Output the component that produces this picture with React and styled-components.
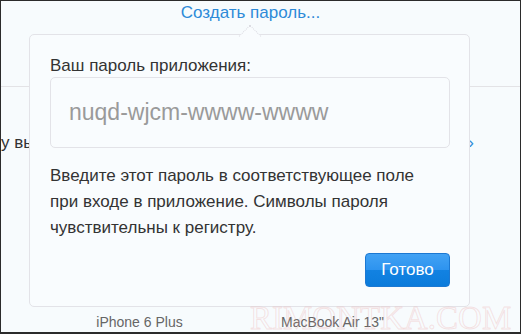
import React from 'react';
import styled, { createGlobalStyle } from 'styled-components';

const GlobalStyle = createGlobalStyle`
  html, body {
    margin: 0;
    padding: 0;
    background: #f7fbfd;
  }
  * {
    box-sizing: border-box;
  }
`;

const App = () => {
  return (
    <>
      <GlobalStyle />
      <Frame>
        <Header>
          <CreateLink>Создать пароль...</CreateLink>
        </Header>

        <Section>
          <Row>
            <RowText>у вышеперечисленных устройств</RowText>
            <Chevron>›</Chevron>
          </Row>
        </Section>

        <Devices>
          <Device>iPhone 6 Plus</Device>
          <Device>MacBook Air 13"</Device>
        </Devices>

        <Popover>
          <Arrow />
          <Label>Ваш пароль приложения:</Label>
          <PasswordBox>nuqd-wjcm-wwww-wwww</PasswordBox>
          <Hint>
            Введите этот пароль в соответствующее поле
            <br />
            при входе в приложение. Символы пароля
            <br />
            чувствительны к регистру.
          </Hint>
          <Actions>
            <DoneButton>Готово</DoneButton>
          </Actions>
        </Popover>

        <Watermark>RIMONTKA.COM</Watermark>
      </Frame>
    </>
  );
};

export default App;

const Frame = styled.div`
  position: relative;
  display: flex;
  flex-direction: column;
  width: 521px;
  height: 334px;
  overflow: hidden;
  border: 1px solid #2b2b2b;
  border-bottom-width: 2px;
  background: #f7fbfd;
  font-family: "Liberation Sans", Arial, sans-serif;
  color: #333;
`;

const Header = styled.div`
  display: flex;
  justify-content: center;
  padding: 2px 20px 0 0;
`;

const CreateLink = styled.a`
  font-size: 17px;
  line-height: 20px;
  color: #2d8ad8;
  cursor: pointer;
`;

const Section = styled.div`
  margin-top: 63px;
  border-top: 1px solid #e3e3e6;
`;

const Row = styled.div`
  display: flex;
  justify-content: space-between;
  align-items: center;
  padding: 46px 46px 0 0;
  font-size: 17px;
  line-height: 20px;
`;

const RowText = styled.span`
  color: #333;
  white-space: nowrap;
`;

const Chevron = styled.span`
  color: #2d8ad8;
  font-size: 17px;
`;

const Devices = styled.div`
  display: grid;
  grid-template-columns: 193px 193px;
  margin-top: auto;
  padding: 0 0 1px 42px;
`;

const Device = styled.span`
  text-align: center;
  font-size: 14px;
  line-height: 18px;
  color: #666;
`;

const Popover = styled.div`
  position: absolute;
  left: 28px;
  top: 33px;
  width: 441px;
  height: 273px;
  display: flex;
  flex-direction: column;
  padding: 20px 19px 19px 20px;
  background: #f9fcfe;
  border: 1px solid #e3e3e8;
  border-radius: 5px;
`;

const Arrow = styled.div`
  position: absolute;
  top: -7px;
  left: 212px;
  width: 16px;
  height: 16px;
  background: #f9fcfe;
  border-top: 1px dotted #dcdce2;
  border-left: 1px dotted #dcdce2;
  transform: rotate(45deg);
`;

const Label = styled.div`
  font-size: 17px;
  line-height: 20px;
  margin-top: 1px;
  margin-bottom: 1px;
  color: #333;
`;

const PasswordBox = styled.div`
  display: flex;
  align-items: center;
  height: 72px;
  padding-left: 18px;
  border: 1px solid #e3e3e8;
  border-radius: 5px;
  font-size: 23px;
  color: #9a9a9a;
`;

const Hint = styled.p`
  margin: 15px 0 0;
  font-size: 17px;
  line-height: 26px;
  color: #333;
`;

const Actions = styled.div`
  display: flex;
  justify-content: flex-end;
  margin-top: 12px;
`;

const DoneButton = styled.button`
  width: 85px;
  height: 34px;
  padding: 0;
  border: 1px solid #1c78d2;
  border-radius: 4px;
  background: linear-gradient(#42a2f4, #2d93ef 50%, #1282e2 50%, #0b7bdb);
  color: #fff;
  font-family: "Liberation Sans", Arial, sans-serif;
  font-size: 17px;
  cursor: pointer;
`;

const Watermark = styled.div`
  position: absolute;
  left: 249px;
  top: 299px;
  font-family: "Liberation Serif", "Times New Roman", serif;
  font-size: 33px;
  line-height: 36px;
  color: transparent;
  -webkit-text-stroke: 1px rgba(236, 160, 160, 0.28);
  pointer-events: none;
  white-space: nowrap;
`;
